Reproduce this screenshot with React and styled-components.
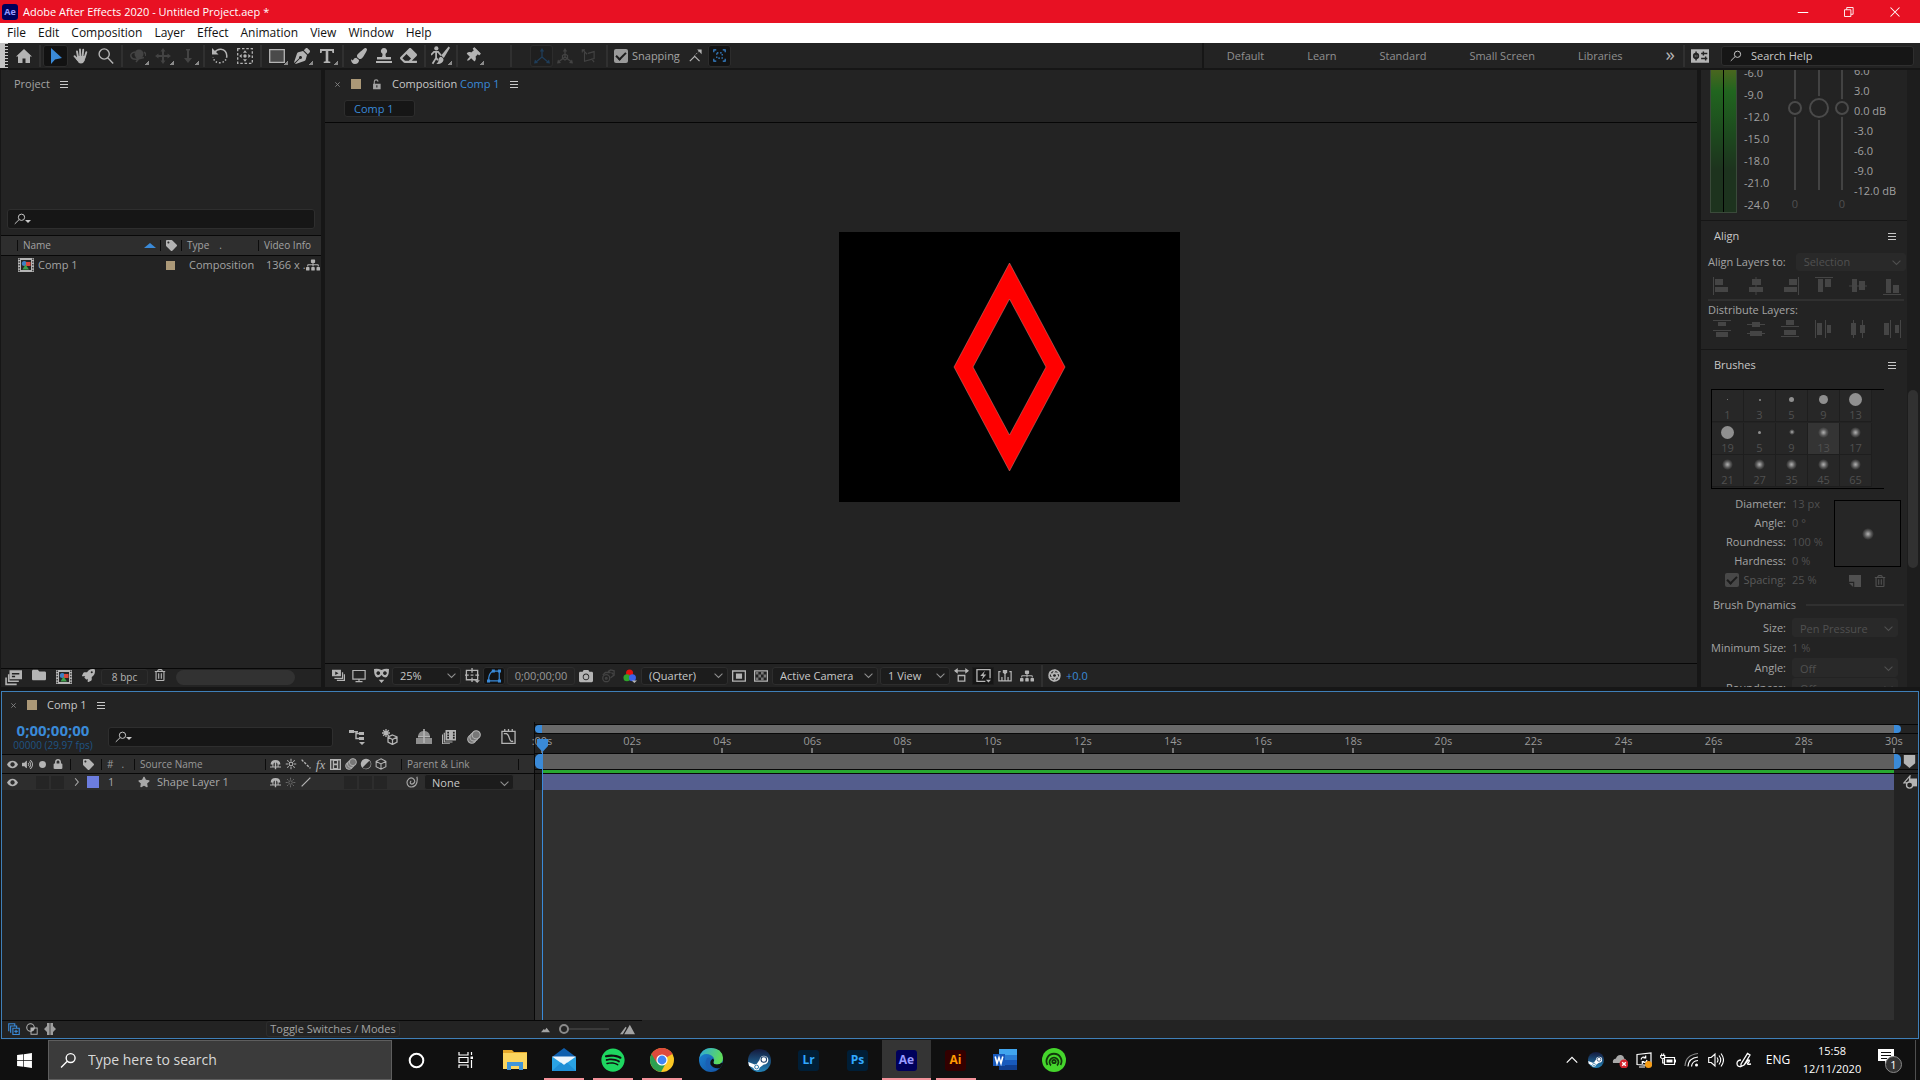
import { useState } from 'react'
import styled, { createGlobalStyle, css } from 'styled-components'
import {
  FaPaintBrush, FaEraser, FaThumbtack, FaPenNib, FaSitemap, FaTag, FaVolumeUp, FaLock,
  FaRegTrashAlt, FaFolder, FaRocket, FaCamera, FaStar, FaSpotify, FaWindows,
} from 'react-icons/fa'
import { Aperture } from 'lucide-react'

const c = {
  panel: '#232323',
  gap: '#161616',
  field: '#161616',
  line: '#303030',
  text: '#a3a3a3',
  bright: '#c8c8c8',
  dim: '#505050',
  blue: '#3a8ad8',
  tan: '#ab9877',
}

const GlobalStyle = createGlobalStyle`
  * { box-sizing: border-box; }
  body {
    margin: 0;
    background: ${c.gap};
    color: ${c.text};
    font-family: 'Open Sans', 'Noto Sans', sans-serif;
    font-size: 11px;
    line-height: 16px;
  }
  button, input, select { font: inherit; color: inherit; }
  button { background: none; border: 0; padding: 0; }
`

/* ---------- icons ---------- */

const glyphs = {
  home: <path d="M8 1 0 8.500h2V15h4.500v-4.500h3V15H14V8.500h2z" />,
  select: <path d="M3 0v16l4-4.500L14 10z" />,
  hand: <path fill="none" stroke="currentColor" strokeWidth="1.900" strokeLinecap="round" d="M5.200 10 4 3.500M7.300 9 7 1.500M9.500 9l.7-7.200M11.500 10l1.800-5.800M5 12 1.500 8.200" />,
  palm: <path d="M4.200 8h8.200l-.6 4.500Q10.500 15.500 8 15.500T4.500 13L3 11z" />,
  zoom: <path fill="none" stroke="currentColor" strokeWidth="1.400" d="M6.200.9a5 5 0 1 1 0 10.200 5 5 0 0 1 0-10.200M10 10l5.200 5.400" />,
  search: <path fill="none" stroke="currentColor" strokeWidth="1.300" d="M10 1.500a4.200 4.200 0 1 1 0 8.400 4.200 4.200 0 0 1 0-8.400M6.800 8.800 1 14.500" />,
  orbit: <g><circle cx="9" cy="6" r="4.500" /><path fill="none" stroke="currentColor" strokeWidth="1.500" d="M5 4Q0 5 1 8.500T8 11l6-1.500M14 4q2.500 2 1.500 4M6 9l2.500 2L6 14" /></g>,
  move: <path d="M8 0l2.500 3.500H9V7h3.500V5.500L16 8l-3.500 2.500V9H9v3.500h1.500L8 16l-2.500-3.500H7V9H3.500v1.500L0 8l3.500-2.500V7H7V3.500H5.500z" />,
  dolly: <path d="M6 1h4v1.500H9V10h3l-4 5-4-5h3V2.500H6z" />,
  rotate: <g fill="none" stroke="currentColor" strokeWidth="1.500"><path d="M2.500 4.500Q5 1 9 1.300 14.500 2 14.800 8" /><path strokeDasharray="1.500 1.800" d="M14.800 8q-.5 6.500-7 6.700Q2 14.500 1.200 9" /><path fill="currentColor" stroke="none" d="M0 0v6.500h6.500z" /></g>,
  pan: <g><path fill="none" stroke="currentColor" strokeWidth="1.300" strokeDasharray="2.500 1.800" d="M.7.700h14.600v14.600H.7z" /><circle cx="8" cy="8" r="1.700" /><path d="M8 2.200l2 2.500H6zM8 13.800l2-2.500H6zM2.200 8l2.500-2v4zM13.800 8l-2.500-2v4z" /></g>,
  rect: <path fill="#4a4a4a" stroke="currentColor" strokeWidth="1.300" d="M.7 1.700h14.600v12.600H.7z" />,
  type: <path d="M1 1h14v4h-1.500L13 3H9.300v10.300l2 .5V15H4.700v-1.200l2-.5V3H3l-.5 2H1z" />,
  stamp: <path d="M8 0a3 3 0 0 1 2 5.300q-1 1 0 3.700h5v2.500H1V9h5q1-2.700 0-3.700A3 3 0 0 1 8 0M0 13h16v2H0z" />,
  roto: <g><circle cx="4.500" cy="2" r="1.800" /><path fill="none" stroke="currentColor" strokeWidth="1.500" d="M0 7.500 2.500 5h3.500l2.500 3M4.300 5v5l-3 5M4.300 10l1.500 2" /><path d="M16 1.500 14.800.500 8.500 8l2.300 2zM8 9q2.800.5 2.500 3-1.500 3.800-6 3 2-.8 1.800-3T8 9" /></g>,
  axis: <g><path fill="none" stroke="currentColor" strokeWidth="1.300" d="M8 2v7l-6 5M8 9l6 5" /><path d="M8 0l2.200 3.500H5.800zM0 15.500l1-4 3 3.500zM16 15.500l-1-4-3 3.500z" /></g>,
  axisBox: <g><path fill="none" stroke="currentColor" strokeWidth="1.300" d="M8 3v6l-6 4.500M8 9l6 4.500M5.500 7.500 8 6l2.500 1.500v3L8 12l-2.500-1.500z" /><path d="M8 0l2.200 3.500H5.800zM0 15.500l1-4 3 3.500zM16 15.500l-1-4-3 3.500z" /></g>,
  axisView: <path fill="none" stroke="currentColor" strokeWidth="1.300" d="M2 1l5 5M1.500 4V1h3M4 4v10l11-3V3L8 5M12 11l3 4" />,
  snapEdge: <g><path fill="none" stroke="currentColor" strokeWidth="1.500" d="M1 15l6-6 6 6" /><path fill="none" stroke="currentColor" strokeWidth="1.200" strokeDasharray="1.500 1.500" d="M7 8l5-5" /><path d="M15.500.500v6l-5.500-6z" /></g>,
  snapBox: <g fill="none" stroke="currentColor" strokeWidth="1.400"><path d="M1 4V1h3M12 1h3v3M15 12v3h-3M4 15H1v-3" /><path strokeDasharray="2 2" d="M4.700 4.700h6.600v6.600H4.700z" /></g>,
  gear: <g><path d="M0 2h16v12H0z" /><circle cx="4.500" cy="8" r="2" fill="none" stroke="#232323" strokeWidth="1.600" /><path fill="none" stroke="#232323" strokeWidth="1.300" d="M4.500 4v8M9 5.800h5.500M11 4v3.500M9 10.200h5.500M13 8.500V12" /></g>,
  lockOpen: <path fillRule="evenodd" d="M3 7h11v8H3zM7.700 9v3.500h1.600V9zM4 7V4q0-3.500 3.500-3.500T11 3.500L9.500 4Q9.300 2 7.500 2T5.500 4v3z" />,
  comp: <g><path fill="#b5b5b5" d="M0 1h16v14H0z" /><path fill="none" stroke="#232323" strokeWidth="1.200" strokeDasharray="1.500 1.300" d="M1.200 1.500v13M14.800 1.500v13" /><path fill="#262626" d="M3 3h10v10H3z" /><circle cx="6.300" cy="6.500" r="2.500" fill="#3f7fc4" /><path fill="#d8463c" d="M8 5h4.500v4H8z" /><path fill="#3fa04c" d="M7.500 7.500l3.500 5H4.500z" /></g>,
  interpret: <g fill="none" stroke="currentColor" strokeWidth="1.500"><path fill="currentColor" d="M5 2h10.300v7H5z" /><path d="M3.500 5v6.500H13M1 8v6.500h10" /><path stroke="#232323" d="M6.500 4.500h7M6.500 7h3" /></g>,
  copyPlay: <g><path fillRule="evenodd" d="M0 1h11v8H0zM4 3v4.500L8 5.200z" /><path fill="none" stroke="currentColor" strokeWidth="1.500" d="M13 4v7.500H3M15.300 6.500v7.500H6" /></g>,
  monitor: <path fill="none" stroke="currentColor" strokeWidth="1.400" d="M1 1.700h14v9.800H1zM8 11.500V14M4 14.500h8" />,
  mask: <path fillRule="evenodd" d="M0 1q4-1 8 1 4-2 8-1 0 9-4 9-2.500 0-4-2.500Q6.500 10 4 10 0 10 0 1m4.500 2.500a2 2 0 1 0 .1 0m7 0a2 2 0 1 0 .1 0M5 12.500h6l-3 3.500z" />,
  target: <g fill="none" stroke="currentColor" strokeWidth="1.400"><path d="M1.500 2.500h12v10h-12zM7.500 0v5M7.500 10v5M0 7.500h4M11 7.500h4M6 7.500h3" /><path fill="currentColor" stroke="none" d="M10 13h6l-3 3z" /></g>,
  maskPath: <g><path fill="none" stroke="currentColor" strokeWidth="1.400" d="M2 13.500V10Q3 4 7 2.500l7 0v11z" /><path d="M0 12h3.500v3.500H0zM12.500 12H16v3.500h-3.500zM12.500.500H16V4h-3.500zM5.500.500H9V4H5.500z" /></g>,
  showSnap: <g fill="none" stroke="currentColor" strokeWidth="1.500"><circle cx="6" cy="10.500" r="4" /><circle cx="6" cy="10.500" r="1" /><path d="M2 7 5 4l6 0M8 3l3-2 4 1v5l-4 3M12 4l2 2" /></g>,
  rgb: <g><circle cx="7.500" cy="4.500" r="4" fill="#e2120e" /><circle cx="4.500" cy="10" r="4" fill="#2fa32c" /><circle cx="10.800" cy="10" r="4" fill="#3c62e8" /><path d="M10 13h6l-3 3z" /></g>,
  roi: <path fillRule="evenodd" d="M0 1.500h16v13H0zM1.500 3v10h13V3zM4.500 5h7v6h-7z" />,
  checker: <g><path fill="none" stroke="currentColor" strokeWidth="1.400" d="M.7 2.200h14.600v11.600H.7z" /><path fill="#777" d="M2 3h3v3.300H2zM8 3h3v3.300H8zM5 6.300h3v3.300H5zM11 6.300h3v3.300h-3zM2 9.600h3V13H2zM8 9.600h3V13H8z" /></g>,
  pixelAspect: <g><path fill="none" stroke="currentColor" strokeWidth="1.400" d="M1 3h14M4.500 8h7v6h-7z" /><path d="M0 3 4 0v6zM16 3l-4-3v6z" /></g>,
  fast: <g><path fill="none" stroke="currentColor" strokeWidth="1.400" d="M10 14.300H1V1.700h14V11" /><path d="M9.500 3 4.500 8.500h3L6 12.500l5-5.500H8zM10.500 12.500H16l-2.700 3z" /></g>,
  tlOpen: <g><path fill="none" stroke="currentColor" strokeWidth="1.400" d="M3 3H1v10.500h14V3h-2M4.500 13V9M8 13V6M11.500 13V9" /><path d="M5.500 1h5v3L8 6.500 5.500 4z" /></g>,
  eye: <path fillRule="evenodd" d="M8 2.500Q13 2.500 16 8q-3 5.500-8 5.500T0 8q3-5.500 8-5.500M8 4.800a3.200 3.200 0 1 0 .1 0" />,
  dot: <circle cx="8" cy="8" r="5" />,
  flow: <g><path d="M0 1h5v3H0zM10 3h5v3h-5zM10 8h5v3h-5zM10 13h6l-3 3z" /><path fill="none" stroke="currentColor" strokeWidth="1.400" d="M4 2.700h5M7 2.500v7h4M7 4.500h4" /></g>,
  draft3d: <g fill="none" stroke="currentColor" strokeWidth="1.300"><path d="M10.500 6 15 8v5l-4.500 2.500L6 13V8zM6 8l4.500 2.500L15 8M10.500 10.500v5M4 0v8M0 4h8M1.200 1.200l5.600 5.600M6.800 1.200 1.200 6.800" /></g>,
  shy: <g><path d="M2 7q1-5 6-5t6 5zM0 9h16v6H0z" opacity=".75" /><path d="M7.200 0h1.600v14H7.200zM2 7h12v1.500H2z" /></g>,
  shySwitch: <path fillRule="evenodd" d="M1 8q0-6.500 7-6.500T15 8h-2.500v3H16v1.500H9V15H7v-2.500H0V11h3.500V8zm4 0v3h2V5Q5 5.500 5 8m4-3v6h2V8q0-2.500-2-3" />,
  blend: <path fillRule="evenodd" d="M4 0h12v12H4zM6 2v2h2V2zM6 5v2h2V5zM6 8v2h2V8zM12.500 2v2h2V2zM12.500 5v2h2V5zM12.500 8v2h2V8zM2 3h1.300v10H12v1.300H2zM0 5h1.200v10H9v1H0z" />,
  motion: <g fill="#777" stroke="currentColor" strokeWidth="1.200"><circle cx="5.500" cy="10.500" r="4.700" /><circle cx="8" cy="8" r="4.700" /><circle cx="10.500" cy="5.500" r="4.700" /></g>,
  graph: <path fill="none" stroke="currentColor" strokeWidth="1.400" d="M1 2.500h14v12.800H1zM4 0v2.500M8 0v2.500M12 0v2.500M3 5h3q2 1 3 5t4 3" />,
  sun: <g fill="none" stroke="currentColor" strokeWidth="1.400"><circle cx="8" cy="8" r="2.500" /><path d="M8 1v3M8 12v3M1 8h3M12 8h3M3 3l2 2M11 11l2 2M13 3l-2 2M5 11l-2 2" /></g>,
  quality: <path fill="none" stroke="currentColor" strokeWidth="2.200" strokeDasharray="4 2" d="M1 1l14 14" />,
  slash: <path fill="none" stroke="currentColor" strokeWidth="2" d="M15 1 1 15" />,
  frame: <path fillRule="evenodd" d="M0 0h16v16H0zM2 2v12h2V2zM12 2v12h2V2zM6 3v3.500h4V3zM6 9v4h4V9z" />,
  adjust: <path fillRule="evenodd" d="M8 1a7 7 0 1 0 .1 0M12.500 3.500a6.200 6.200 0 0 1-9 9z" />,
  cube: <path fill="none" stroke="currentColor" strokeWidth="1.400" d="M8 1l6.500 3.500v7L8 15l-6.500-3.500v-7zM1.500 4.500 8 8l6.500-3.500M8 8v7" />,
  spiral: <path fill="none" stroke="currentColor" strokeWidth="1.500" d="M14.500 1Q16 7 13 12q-4 4-9 2-4-3-2-8 3-5 7-3 4 3 2 6-3 3-5 1-1-2 1-3.500" />,
  chevron: <path fill="none" stroke="currentColor" strokeWidth="1.800" d="M1 4.500 8 11.500l7-7" />,
  chevronUp: <path fill="none" stroke="currentColor" strokeWidth="1.600" d="M1 11.500l7-7 7 7" />,
  arrowRight: <path fill="none" stroke="currentColor" strokeWidth="1.800" d="M5 2l5 6-5 6" />,
  newBrush: <path d="M0 0h16v16H7V9H0zM0 10.500h5.500V16z" />,
  layers: <g fill="none" stroke="#3a8ad8" strokeWidth="1.500"><path d="M1 11V1h8v3M3.500 13V4h8v2.500" /><path d="M6.500 7h8.500v8.500H6.500zM10.700 9v4.500M8.500 11.200H13" /></g>,
  modes: <g><circle cx="6" cy="6" r="5" fill="none" stroke="currentColor" strokeWidth="1.400" /><path fillRule="evenodd" d="M6 6h9.500v9.500H6zM7.300 11v3.200h7v-7h-3Q11 10.500 7.300 11" /></g>,
  inOut: <path d="M4 0h3.500v16H4v-4L0 8l4-4zM8.500 0H12v4l4 4-4 4v4H8.500z" opacity=".85" />,
  marker: <path d="M1 0h14v10l-7 6-7-6z" />,
  compBtn: <g><path d="M8 4h8v9H8z" /><path fill="#232323" stroke="currentColor" strokeWidth="1.400" d="M8 1 1 9h6z" /><circle cx="7.500" cy="11.500" r="3.500" fill="#232323" stroke="currentColor" strokeWidth="1.500" /></g>,
  mountain: <path d="M0 13l5-6 2 2 3-4 6 8z" />,
  mountains: <path d="M4.500 13 10.500 3 16 13zM0 13 6 5l1 1-4 7z" />,
  minimize: <path d="M1 8h14v1.300H1z" />,
  restore: <path fill="none" stroke="currentColor" strokeWidth="1.200" d="M2 5h8.500v9H2zM5 5V2h8.500v9h-3" />,
  close: <path fill="none" stroke="currentColor" strokeWidth="1.400" d="M2 2l12 12M14 2 2 14" />,
  closeTab: <path fill="none" stroke="currentColor" strokeWidth="2.700" d="M1 1l14 14M15 1 1 15" />,
  taskView: <g fill="none" stroke="currentColor" strokeWidth="1.200"><path d="M1 0v3h9V0M1 16v-3h9v3M1 5.500h9v5H1zM13.500 0v3M13.500 8v8" /><path fill="currentColor" stroke="none" d="M12.500 4.500h2.500V7h-2.500z" /></g>,
}

const GlyphSvg = styled.svg`
  display: block;
  flex: none;
  fill: currentColor;
`

function Glyph({ name, size = 16 }) {
  return (
    <GlyphSvg width={size} height={size} viewBox="0 0 16 16" aria-hidden="true">
      {glyphs[name]}
      {name === 'hand' && glyphs.palm}
    </GlyphSvg>
  )
}

/* ---------- shared parts ---------- */

const Page = styled.div`
  display: flex;
  flex-direction: column;
  height: 100vh;
  overflow: hidden;
  white-space: nowrap;
`

const Burger = styled.button`
  width: 8px;
  height: 7px;
  border-top: 1px solid ${c.bright};
  border-bottom: 1px solid ${c.bright};
  background: linear-gradient(transparent 2px, ${c.bright} 2px, ${c.bright} 3px, transparent 3px);
`

const Swatch = styled.span`
  flex: none;
  width: ${p => p.$size || 10}px;
  height: ${p => p.$size || 10}px;
  background: ${p => p.$color || c.tan};
`

const CloseX = styled.button`
  width: 6px;
  height: 16px;
  display: flex;
  align-items: center;
  color: #8a8a8a;
`

const Tick = styled.input`
  appearance: none;
  flex: none;
  width: 14px;
  height: 14px;
  margin: 0;
  border-radius: 2px;
  background: ${p => (p.disabled ? '#484848' : '#9a9a9a')};
  display: grid;
  place-items: center;
  &:checked::after {
    content: '';
    width: 8px;
    height: 4px;
    border-left: 2px solid #1c1c1c;
    border-bottom: 2px solid #1c1c1c;
    transform: translateY(-1px) rotate(-45deg);
  }
`

const SelectBox = styled.span`
  display: inline-grid;
  align-items: center;
  flex: none;
  width: ${p => p.$w}px;
  height: ${p => p.$h || 18}px;
  color: ${p => (p.$dim ? c.dim : c.bright)};
  background: ${p => (p.$dim ? '#292929' : '#1c1c1c')};
  border: 1px solid ${p => (p.$dim ? '#292929' : '#2d2d2d')};
  border-radius: 3px;
  select, svg { grid-area: 1 / 1; }
  select {
    appearance: none;
    width: 100%;
    border: 0;
    padding: 0 20px 0 7px;
    background: none;
    opacity: 1;
  }
  svg { justify-self: end; margin-right: 4px; pointer-events: none; color: ${p => (p.$dim ? c.dim : '#8f8f8f')}; }
`

function Select({ label, w, h, dim, value }) {
  return (
    <SelectBox $w={w} $h={h} $dim={dim}>
      <select aria-label={label} disabled={dim} defaultValue={value}>
        <option>{value}</option>
      </select>
      <Glyph name="chevron" size={9} />
    </SelectBox>
  )
}

const SearchBox = styled.label`
  display: flex;
  align-items: center;
  flex: none;
  gap: ${p => p.$gap || 4}px;
  width: ${p => (p.$w ? p.$w + 'px' : 'auto')};
  height: 20px;
  padding: 0 ${p => (p.$gap ? 8 : 6)}px;
  background: ${c.field};
  border: 1px solid #2e2e2e;
  border-radius: 3px;
  color: ${c.bright};
  input {
    flex: 1;
    min-width: 0;
    border: 0;
    padding: 0;
    background: none;
    outline: 0;
  }
  input::placeholder { color: ${c.bright}; opacity: 1; }
`

const DownTri = styled.i`
  border: 3px solid transparent;
  border-top-color: ${c.bright};
  border-bottom: 0;
  margin: 4px 0 0 -5px;
`

/* ---------- title and menu ---------- */

const TitleBar = styled.header`
  display: flex;
  align-items: center;
  height: 23px;
  flex: none;
  padding: 0 2px;
  gap: 5px;
  background: #e81123;
  color: #fff;
`

const AppBadge = styled.span`
  display: grid;
  place-items: center;
  width: ${p => p.$size}px;
  height: ${p => p.$size}px;
  border-radius: 3px;
  background: ${p => p.$bg};
  color: ${p => p.$fg};
  font-weight: 700;
  font-size: ${p => (p.$size > 18 ? 12 : 9)}px;
  line-height: 1;
`

const WindowButtons = styled.div`
  display: flex;
  margin-left: auto;
  button {
    display: grid;
    place-items: center;
    width: 46px;
    height: 20px;
  }
`

const MenuBar = styled.nav`
  display: flex;
  align-items: center;
  height: 20px;
  flex: none;
  padding-left: 7px;
  gap: 12px;
  background: #fff;
  color: #111;
  font-size: 12px;
`

const menus = ['File', 'Edit', 'Composition', 'Layer', 'Effect', 'Animation', 'View', 'Window', 'Help']

/* ---------- toolbar ---------- */

const ToolBar = styled.div`
  display: flex;
  align-items: center;
  height: 27px;
  flex: none;
  background: ${c.panel};
  border-bottom: 2px solid ${c.gap};
`

const Gripper = styled.div`
  width: 8px;
  height: 25px;
  margin-right: 3px;
  border-left: 5px solid #c4c4c4;
  background: repeating-linear-gradient(#c4c4c4 0 1px, ${c.panel} 1px 3px);
`

const Tool = styled.button`
  display: flex;
  align-items: center;
  justify-content: center;
  flex: none;
  width: ${p => p.$w || 25}px;
  height: 22px;
  color: ${p => (p.$off ? '#434343' : '#b4b4b4')};
  ${p => p.$sub && css`
    background: linear-gradient(135deg, transparent 50%, #8a8a8a 50%) right 1px bottom 2px / 4px 4px no-repeat;
  `}
  ${p => p.$on && css`
    background: ${p.$off ? '#1f1f1f' : '#121212'};
    box-shadow: inset 0 0 0 1px #2c2c2c;
    border-radius: 3px;
    color: ${p.$off ? '#1f3d59' : c.blue};
  `}
  ${p => p.$pressed && css`
    background: #151515;
    box-shadow: inset 0 0 0 1px #1c1c1c;
  `}
`

const Sep = styled.span`
  flex: none;
  width: 7px;
  height: 22px;
  background: linear-gradient(#303030, #303030) center / 2px 100% no-repeat;
`

const Space = styled.span`
  flex: none;
  width: ${p => p.$w}px;
`

const SnapLabel = styled.label`
  display: flex;
  align-items: center;
  gap: 4px;
`

const Workspaces = styled.div`
  display: flex;
  align-items: center;
  gap: 43px;
  margin-left: auto;
  padding: 0 8px 0 23px;
  border-left: 2px solid ${c.gap};
  height: 25px;
  color: #909090;
`

const HelpArea = styled.div`
  display: flex;
  align-items: center;
  gap: 12px;
  height: 22px;
  padding: 0 6px 0 5px;
  border-left: 2px solid #303030;
`

const More = styled.button`
  font-size: 19px;
  padding-bottom: 4px;
  line-height: 16px;
  color: #b4b4b4;
`

const toolGroups = [
  [{ n: 'home' }],
  [{ n: 'select', on: true }, { n: 'hand' }, { n: 'zoom' }],
  [{ n: 'orbit', off: true, sub: true }, { n: 'move', off: true, sub: true }, { n: 'dolly', off: true, sub: true }],
  [{ n: 'rotate' }, { n: 'pan' }],
  [{ n: 'rect', sub: true }, { n: 'pen', icon: <FaPenNib size={16} />, sub: true }, { n: 'type', sub: true }],
  [{ n: 'brush', icon: <FaPaintBrush size={16} /> }, { n: 'stamp' }, { n: 'eraser', icon: <FaEraser size={17} /> }],
  [{ n: 'roto', sub: true, size: 19 }],
  [{ n: 'pin', icon: <FaThumbtack size={15} style={{ rotate: '45deg' }} />, sub: true }],
]

function TopTools() {
  const [snap, setSnap] = useState(true)
  return (
    <ToolBar>
      <Gripper />
      {toolGroups.map((group, i) => [
        i > 0 && <Sep key={'sep' + i} />,
        ...group.map(t => (
          <Tool key={t.n} aria-label={t.n} $on={t.on} $off={t.off} $sub={t.sub}>
            {t.icon || <Glyph name={t.n} size={t.size} />}
          </Tool>
        )),
      ])}
      <Space $w={22} />
      <Sep />
      <Space $w={16} />
      <Tool aria-label="local axis" $w={23} $on $off><Glyph name="axis" /></Tool>
      <Tool aria-label="world axis" $w={23} $off><Glyph name="axisBox" /></Tool>
      <Tool aria-label="view axis" $w={23} $off><Glyph name="axisView" size={14} /></Tool>
      <Space $w={4} />
      <Sep />
      <Space $w={4} />
      <SnapLabel>
        <Tick type="checkbox" checked={snap} onChange={() => setSnap(!snap)} />
        Snapping
      </SnapLabel>
      <Space $w={3} />
      <Tool aria-label="snap edges"><Glyph name="snapEdge" size={13} /></Tool>
      <Tool aria-label="snap features" $w={23} $on><Glyph name="snapBox" size={13} /></Tool>
      <Workspaces>
        {['Default', 'Learn', 'Standard', 'Small Screen', 'Libraries'].map(w => <button key={w}>{w}</button>)}
        <More aria-label="more workspaces">»</More>
      </Workspaces>
      <HelpArea>
        <Tool aria-label="workspace settings" $w={19}><Glyph name="gear" size={18} /></Tool>
        <SearchBox $w={193} $gap={9}>
          <Glyph name="search" size={12} />
          <input placeholder="Search Help" aria-label="Search Help" />
        </SearchBox>
      </HelpArea>
    </ToolBar>
  )
}

/* ---------- main row ---------- */

const Main = styled.main`
  display: grid;
  grid-template-columns: 320px 1fr 206px 9px;
  column-gap: 4px;
  flex: 1;
  min-height: 0;
  padding: 0 0 4px 1px;
`

const Panel = styled.section`
  display: flex;
  flex-direction: column;
  min-width: 0;
  min-height: 0;
  overflow: hidden;
  background: ${c.panel};
`

const PanelHead = styled.div`
  display: flex;
  align-items: center;
  flex: none;
  height: 28px;
  gap: 10px;
  padding-left: ${p => p.$pad || 13}px;
  color: ${c.text};
`

const PreviewArea = styled.div`
  height: 111px;
  flex: none;
`

const ProjectSearch = styled.div`
  display: flex;
  flex-direction: column;
  padding: 0 6px 6px;
`

const ProjectTable = styled.table`
  table-layout: fixed;
  width: 100%;
  border-collapse: collapse;
  color: ${c.text};
  th {
    height: 20px;
    padding: 0;
    border-top: 1px solid #080808;
    border-bottom: 1px solid #080808;
    background: #2e2e2e;
    font-weight: 400;
    font-size: 10px;
    text-align: left;
  }
  td { height: 19px; padding: 0; }
`

const HeadCell = styled.span`
  display: flex;
  align-items: center;
  height: 11px;
  line-height: 11px;
  gap: ${p => p.$gap || 0}px;
  padding: 0 4px 0 5px;
  border-left: 1px solid #0c0c0c;
`

const CellRow = styled.span`
  display: flex;
  align-items: center;
  gap: ${p => (p.$gap === undefined ? 4 : p.$gap)}px;
  padding-left: ${p => p.$pad || 0}px;
`

const SortTri = styled.i`
  margin-left: auto;
  border: 6px solid transparent;
  border-bottom: 5px solid ${c.blue};
  border-top: 0;
`

const PanelFoot = styled.div`
  display: flex;
  align-items: center;
  flex: none;
  margin-top: auto;
  color: #b4b4b4;
  border-top: 1px solid #080808;
  ${p => p.$comp
    ? css`height: 24px; padding-left: 3px;`
    : css`height: 19px; padding: 0 0 2px 4px; gap: 10px;`}
`

const BpcButton = styled.button`
  width: 47px;
  height: 16px;
  margin: 0 -4px;
  border: 1px solid #2d2d2d;
  border-radius: 3px;
  font-size: 10px;
  line-height: 14px;
`

const ScrollPill = styled.div`
  width: 119px;
  height: 15px;
  border-radius: 8px;
  background: #323232;
`

function ProjectPanel() {
  return (
    <Panel>
      <PanelHead>Project <Burger aria-label="panel menu" /></PanelHead>
      <PreviewArea />
      <ProjectSearch>
        <SearchBox>
          <Glyph name="search" size={12} />
          <DownTri />
          <input aria-label="Search project" />
        </SearchBox>
      </ProjectSearch>
      <ProjectTable>
        <colgroup>
          <col width="16" /><col width="143" /><col width="21" /><col width="77" /><col />
        </colgroup>
        <thead>
          <tr>
            <th />
            <th><HeadCell>Name<SortTri /></HeadCell></th>
            <th><HeadCell><FaTag size={11} color="#b4b4b4" /></HeadCell></th>
            <th><HeadCell $gap={10}>Type <span>.</span></HeadCell></th>
            <th><HeadCell>Video Info</HeadCell></th>
          </tr>
        </thead>
        <tbody>
          <tr>
            <td />
            <td><CellRow $pad={1}><Glyph name="comp" />Comp 1</CellRow></td>
            <td><CellRow $pad={6}><Swatch $size={9} /></CellRow></td>
            <td><CellRow $pad={8}>Composition</CellRow></td>
            <td><CellRow $pad={8} $gap={0}>1366 x .<FaSitemap size={14} color="#b4b4b4" /></CellRow></td>
          </tr>
        </tbody>
      </ProjectTable>
      <PanelFoot>
        <button aria-label="interpret footage"><Glyph name="interpret" size={17} /></button>
        <button aria-label="new folder"><FaFolder size={14} /></button>
        <button aria-label="new composition"><Glyph name="comp" size={16} /></button>
        <button aria-label="project settings"><FaRocket size={13} /></button>
        <BpcButton>8 bpc</BpcButton>
        <button aria-label="delete"><FaRegTrashAlt size={12} /></button>
        <ScrollPill />
      </PanelFoot>
    </Panel>
  )
}

const CompTitle = styled.span`
  color: ${c.bright};
  b { font-weight: 400; color: ${c.blue}; }
`

const CompTabs = styled.div`
  display: flex;
  flex: none;
  height: 25px;
  padding: 2px 19px;
  border-bottom: 1px solid #060606;
`

const CompTab = styled.button`
  width: 71px;
  height: 17px;
  padding-left: 9px;
  border: 1px solid #2d2d2d;
  border-radius: 3px;
  background: ${c.field};
  color: ${c.blue};
  line-height: 15px;
  text-align: left;
`

const Viewport = styled.div`
  flex: 1;
  display: flex;
  justify-content: center;
  align-items: flex-start;
  padding: 109px 3px 0 0;
`

const Artboard = styled.svg`
  display: block;
  width: 341px;
  height: 270px;
  background: #000;
`

const FootItem = styled(Tool)`
  width: ${p => p.$w || 22}px;
  height: 18px;
`

const TimeBox = styled.button`
  width: 68px;
  height: 18px;
  border: 1px solid #2d2d2d;
  border-radius: 3px;
  color: #999;
`

const Exposure = styled.span`
  padding-left: 3px;
  color: ${c.blue};
`

function CompositionPanel() {
  return (
    <Panel>
      <PanelHead $pad={10}>
        <CloseX aria-label="close"><Glyph name="closeTab" size={5} /></CloseX>
        <Swatch />
        <Glyph name="lockOpen" size={11} />
        <CompTitle>Composition <b>Comp 1</b></CompTitle>
        <Burger aria-label="panel menu" />
      </PanelHead>
      <CompTabs><CompTab>Comp 1</CompTab></CompTabs>
      <Viewport>
        <Artboard viewBox="0 0 341 270">
          <path
            fill="#f00" stroke="#c98a80" strokeWidth="0.5" fillRule="evenodd"
            d="M170.500 31 226 135 170.500 239 115 135zM170.500 67 134 135 170.500 203 207 135z"
          />
        </Artboard>
      </Viewport>
      <PanelFoot $comp>
        <FootItem aria-label="always preview" $w={20}><Glyph name="copyPlay" size={13} /></FootItem>
        <FootItem aria-label="primary viewer"><Glyph name="monitor" size={14} /></FootItem>
        <FootItem aria-label="vr"><Glyph name="mask" size={15} /></FootItem>
        <Select label="Magnification" w={69} value="25%" />
        <FootItem aria-label="grid options"><Glyph name="target" size={15} /></FootItem>
        <FootItem aria-label="mask visibility" $on><Glyph name="maskPath" size={14} /></FootItem>
        <Space $w={2} />
        <TimeBox>0;00;00;00</TimeBox>
        <FootItem aria-label="snapshot"><FaCamera size={14} /></FootItem>
        <FootItem aria-label="show snapshot" $off><Glyph name="showSnap" size={14} /></FootItem>
        <FootItem aria-label="channels"><Glyph name="rgb" size={14} /></FootItem>
        <Select label="Resolution" w={87} value="(Quarter)" />
        <FootItem aria-label="region of interest"><Glyph name="roi" size={14} /></FootItem>
        <FootItem aria-label="transparency grid"><Glyph name="checker" size={14} /></FootItem>
        <Select label="3D view" w={106} value="Active Camera" />
        <Space $w={2} />
        <Select label="View layout" w={70} value="1 View" />
        <FootItem aria-label="pixel aspect"><Glyph name="pixelAspect" size={15} /></FootItem>
        <FootItem aria-label="fast previews" $pressed><Glyph name="fast" size={15} /></FootItem>
        <FootItem aria-label="timeline"><Glyph name="tlOpen" size={14} /></FootItem>
        <FootItem aria-label="flowchart"><FaSitemap size={14} /></FootItem>
        <Sep />
        <FootItem aria-label="reset exposure" $w={18}><Aperture size={13} strokeWidth={3} /></FootItem>
        <Exposure>+0.0</Exposure>
      </PanelFoot>
    </Panel>
  )
}

/* ---------- right column ---------- */

const Audio = styled.div`
  display: flex;
  align-items: flex-end;
  flex: none;
  height: 150px;
  overflow: hidden;
  padding-left: 9px;
  color: #a0a0a0;
`

const Meter = styled.div`
  width: 27px;
  height: 143px;
  margin-bottom: 7px;
  border: 1px solid #3a4a3a;
  border-top: 0;
  background:
    linear-gradient(#000, #000) center / 1px 100% no-repeat,
    linear-gradient(#4a661f, #21651f 15%, #1d4a1e 45%, #1d331e 70%);
`

const Scale = styled.div`
  display: flex;
  flex-direction: column;
  flex: none;
  width: ${p => p.$w}px;
  padding-left: ${p => p.$pad || 0}px;
  margin-bottom: ${p => p.$bottom}px;
  line-height: ${p => p.$line}px;
`

const Faders = styled.div`
  display: flex;
  align-items: flex-end;
  flex: none;
  margin-left: 10px;
`

const Channel = styled.label`
  display: flex;
  flex-direction: column;
  align-items: center;
  width: ${p => (p.$wide ? 23 : 24)}px;
  color: ${c.dim};
  span { height: 30px; padding-top: 6px; }
  input {
    appearance: none;
    writing-mode: vertical-lr;
    width: 22px;
    height: 164px;
    margin: 0;
    background: linear-gradient(#434343, #434343) center / 2px 100% no-repeat;
  }
  input::-webkit-slider-thumb {
    appearance: none;
    width: ${p => (p.$wide ? 20 : 14)}px;
    height: ${p => (p.$wide ? 20 : 14)}px;
    border: 2px solid #4a4a4a;
    border-radius: 50%;
    background: ${c.panel};
    box-shadow: 0 0 0 2px ${c.panel};
  }
`

const SideHead = styled.div`
  display: flex;
  align-items: center;
  justify-content: space-between;
  flex: none;
  height: 31px;
  padding: 0 11px 0 13px;
  border-top: 1px solid ${c.gap};
  color: ${c.bright};
`

const AlignBody = styled.div`
  height: 98px;
  flex: none;
  padding: 2px 3px 0 7px;
`

const Row = styled.div`
  display: flex;
  align-items: center;
  gap: 10px;
`

const DynamicsHead = styled(Row)`
  padding: 8px 0 5px 2px;
`

const AlignIcons = styled.div`
  display: flex;
  gap: 16px;
  padding: ${p => (p.$last ? '2px 0 0 5px' : '6px 0 4px 5px')};
  color: #454545;
`

const Rule = styled.hr`
  flex: 1;
  height: 2px;
  margin: 0;
  border: 0;
  background: ${c.line};
`

const DistributeLabel = styled.div`
  padding-top: 1px;
`

const alignIcons = [
  'M0 0h1v18H0zM2 2h8v6H2zM2 10h13v5H2z',
  'M8.500 0h1v18h-1zM5 2h9v6H5zM2 10h14v5H2z',
  'M17 0h1v18h-1zM8 2h8v6H8zM3 10h13v5H3z',
  'M0 0h18v1H0zM3 2h5v13H3zM10 2h6v8h-6z',
  'M0 8.500h18v1H0zM3 2h5v13H3zM10 4h6v9h-6z',
  'M0 17h18v1H0zM3 2h5v14H3zM10 8h6v8h-6z',
]

const distributeIcons = [
  'M0 0h18v1H0zM5 2h8v4H5zM0 10h18v1H0zM3 12h12v5H3z',
  'M0 4h18v1H0zM5 2h8v5H5zM0 13h18v1H0zM3 11h12v5H3z',
  'M0 6h18v1H0zM5 0h8v5H5zM0 16h18v1H0zM3 10h12v5H3z',
  'M0 0h1v18H0zM2 3h5v12H2zM10 0h1v18h-1zM12 5h4v8h-4z',
  'M4 0h1v18H4zM2 3h5v12H2zM13 0h1v18h-1zM11 5h5v8h-5z',
  'M7 0h1v18H7zM1 3h5v12H1zM17 0h1v18h-1zM12 5h4v8h-4z',
]

const BrushBody = styled.div`
  padding: 9px 3px 0 10px;
`

const BrushGrid = styled.div`
  display: grid;
  grid-template-columns: repeat(5, 32px);
  width: 173px;
  height: 100px;
  border: 1px solid #000;
  border-right: 0;
`

const BrushCell = styled.button`
  display: grid;
  grid-template-rows: 19px 12px;
  place-items: center;
  height: 32px;
  padding-bottom: 2px;
  line-height: 10px;
  border: 1px solid #1e1e1e;
  border-width: 0 1px 1px 0;
  background: ${p => (p.$on ? '#343434' : '#272727')};
  color: ${c.dim};
`

const BrushDot = styled.i`
  width: ${p => p.$d}px;
  height: ${p => p.$d}px;
  border-radius: 50%;
  background: ${p => (p.$soft ? 'radial-gradient(#a8a8a8 5%, #5a5a5a 40%, transparent 70%)' : '#8f8f8f')};
`

const brushes = [
  [1, 1], [3, 2], [5, 5], [9, 9], [13, 13],
  [19, 13], [5, 3], [9, 6, 1], [13, 11, 1], [17, 11, 1],
  [21, 11, 1], [27, 11, 1], [35, 11, 1], [45, 11, 1], [65, 11, 1],
]

const BrushInfo = styled.div`
  display: flex;
  padding-top: 5px;
`

const Props = styled.dl`
  display: grid;
  grid-template-columns: 75px 42px;
  column-gap: 6px;
  margin: 0;
  grid-auto-rows: ${p => p.$row}px;
  align-items: center;
  line-height: ${p => p.$row}px;
  dt { text-align: right; }
  dd { margin: 0; color: ${c.dim}; }
`

const SpacingLabel = styled.label`
  display: flex;
  align-items: center;
  justify-content: flex-end;
  gap: 4px;
  color: #5a5a5a;
`

const BrushSide = styled.div`
  display: flex;
  flex-direction: column;
  align-items: center;
  gap: 8px;
  padding-top: 6px;
`

const BrushPreview = styled.div`
  display: grid;
  place-items: center;
  width: 67px;
  height: 67px;
  border: 1px solid #000;
  background: #262626;
`

const BrushActions = styled.div`
  display: flex;
  gap: 13px;
  color: ${c.dim};
`

const Gutter = styled.div`
  margin-left: -4px;
  padding: 320px 2px 0 1px;
  background: #1d1d1d;
`

const GutterThumb = styled.div`
  height: 178px;
  border-radius: 5px;
  background: #313131;
`

function SideColumn() {
  return (
    <Panel>
      <Audio>
        <Meter />
        <Scale $w={36} $pad={7} $bottom={4} $line={22}>
          {['-6.0', '-9.0', '-12.0', '-15.0', '-18.0', '-21.0', '-24.0'].map(v => <span key={v}>{v}</span>)}
        </Scale>
        <Faders>
          <Channel><input type="range" aria-label="Left level" defaultValue="50" /><span>0</span></Channel>
          <Channel $wide><input type="range" aria-label="Master level" defaultValue="50" /><span /></Channel>
          <Channel><input type="range" aria-label="Right level" defaultValue="50" /><span>0</span></Channel>
        </Faders>
        <Scale $w={52} $bottom={19} $line={20}>
          {['6.0', '3.0', '0.0 dB', '-3.0', '-6.0', '-9.0', '-12.0 dB'].map(v => <span key={v}>{v}</span>)}
        </Scale>
      </Audio>
      <SideHead>Align <Burger aria-label="panel menu" /></SideHead>
      <AlignBody>
        <Row>Align Layers to: <Select label="Align Layers to" w={110} dim value="Selection" /></Row>
        <AlignIcons>
          {alignIcons.map(d => <GlyphSvg key={d} width="18" height="18"><path d={d} /></GlyphSvg>)}
        </AlignIcons>
        <Rule />
        <DistributeLabel>Distribute Layers:</DistributeLabel>
        <AlignIcons $last>
          {distributeIcons.map(d => <GlyphSvg key={d} width="18" height="18"><path d={d} /></GlyphSvg>)}
        </AlignIcons>
      </AlignBody>
      <SideHead>Brushes <Burger aria-label="panel menu" /></SideHead>
      <BrushBody>
        <BrushGrid>
          {brushes.map(([n, d, soft], i) => (
            <BrushCell key={i} $on={i === 8}><BrushDot $d={d} $soft={soft} />{n}</BrushCell>
          ))}
        </BrushGrid>
        <BrushInfo>
          <Props $row={19}>
            <dt>Diameter:</dt><dd>13 px</dd>
            <dt>Angle:</dt><dd>0 °</dd>
            <dt>Roundness:</dt><dd>100 %</dd>
            <dt>Hardness:</dt><dd>0 %</dd>
            <dt><SpacingLabel><Tick type="checkbox" checked disabled readOnly />Spacing:</SpacingLabel></dt>
            <dd>25 %</dd>
          </Props>
          <BrushSide>
            <BrushPreview><BrushDot $d={12} $soft /></BrushPreview>
            <BrushActions>
              <Glyph name="newBrush" size={12} />
              <FaRegTrashAlt size={12} />
            </BrushActions>
          </BrushSide>
        </BrushInfo>
        <DynamicsHead>Brush Dynamics<Rule /></DynamicsHead>
        <Props $row={20}>
          <dt>Size:</dt><dd><Select label="Size" w={106} h={19} dim value="Pen Pressure" /></dd>
          <dt>Minimum Size:</dt><dd>1 %</dd>
          <dt>Angle:</dt><dd><Select label="Angle" w={106} h={19} dim value="Off" /></dd>
          <dt>Roundness:</dt><dd><Select label="Roundness" w={106} h={19} dim value="Off" /></dd>
        </Props>
      </BrushBody>
    </Panel>
  )
}

/* ---------- timeline ---------- */

const TimelinePanel = styled.section`
  display: flex;
  flex-direction: column;
  flex: none;
  height: 348px;
  margin: 0 1px 1px;
  border: 1px solid #3f7fb8;
  background: ${c.panel};
`

const TimelineTabs = styled(PanelHead)`
  height: 30px;
  padding: 0 0 4px 9px;
  color: ${c.bright};
`

const TimelineBody = styled.div`
  display: flex;
  flex: 1;
  min-height: 0;
`

const LayerPane = styled.div`
  width: 533px;
  flex: none;
  border-right: 1px solid #080808;
`

const TimeTools = styled.div`
  display: flex;
  align-items: center;
  height: 32px;
  padding: 0 10px 3px;
  color: #b4b4b4;
`

const Timecode = styled.div`
  display: flex;
  flex-direction: column;
  align-items: center;
  width: 82px;
  margin-right: 14px;
  color: #1f5484;
  font-size: 10px;
  line-height: 14px;
  strong { font-size: 15px; line-height: 16px; color: ${c.blue}; }
`

const LayerGrid = styled.div`
  display: grid;
  grid-template-columns: 68px 31px 33px 131px 136px 117px 1fr;
  align-items: center;
  height: ${p => (p.$head ? 20 : 16)}px;
  background: #2d2d2d;
  ${p => p.$head && css`
    font-size: 10px;
    border: 1px solid #080808;
    border-width: 1px 0;
  `}
`

const LayerCell = styled.div`
  display: flex;
  align-items: center;
  height: ${p => (p.$head ? 11 : 16)}px;
  gap: ${p => p.$gap || 0}px;
  padding-left: ${p => (p.$pad === undefined ? 5 : p.$pad)}px;
  border-left: ${p => (p.$head && !p.$first ? '1px solid #0c0c0c' : '0')};
  color: ${p => (p.$head ? '#999' : '#a8a8a8')};
`

const SwitchCell = styled.span`
  display: grid;
  place-items: center;
  flex: none;
  width: 15px;
  height: 14px;
  color: ${p => (p.$dim ? '#6a6a6a' : '#b4b4b4')};
  i { width: 13px; height: 13px; background: #252525; }
`

const Fx = styled.em`
  font: italic 13px 'Liberation Serif', serif;
`

const TrackPane = styled.div`
  position: relative;
  display: flex;
  flex-direction: column;
  flex: 1;
  min-width: 0;
  padding-top: 2px;
`

const TrackRow = styled.div`
  display: flex;
  flex: none;
  height: ${p => p.$h}px;
  ${p => p.$line && css`border-bottom: 1px solid #080808;`}
  ${p => p.$top && css`border-top: 1px solid #080808;`}
`

const Handle = styled.span`
  width: 7px;
  background: ${c.blue};
  border-radius: ${p => (p.$end ? '0 5px 5px 0' : '5px 0 0 5px')};
`

const Bar = styled.span`
  flex: 1;
  background: ${p => p.$color};
`

const Pad = styled.span`
  display: grid;
  place-items: center;
  width: ${p => p.$w}px;
  color: #b4b4b4;
`

const Ruler = styled.div`
  display: flex;
  flex: 1;
  justify-content: space-between;
  color: #999;
`

const RulerMark = styled.span`
  display: flex;
  flex-direction: column;
  align-items: center;
  justify-content: flex-end;
  width: 0;
  line-height: 14px;
  &::after {
    content: '';
    width: 2px;
    height: 5px;
    background: #757575;
  }
`

const Tracks = styled.div`
  flex: 1;
  margin-right: 24px;
  background: #303030;
`

const Playhead = styled.div`
  position: absolute;
  left: 2px;
  top: 17px;
  bottom: 0;
  width: 11px;
  display: flex;
  flex-direction: column;
  align-items: center;
  color: ${c.blue};
  &::after {
    content: '';
    flex: 1;
    width: 1px;
    background: ${c.blue};
  }
`

const TimelineFoot = styled.div`
  display: flex;
  align-items: center;
  flex: none;
  height: 18px;
  padding-left: 4px;
  gap: 3px;
  background: linear-gradient(90deg, #080808 640px, transparent 640px) top / 100% 1px no-repeat;
`

const ToggleButton = styled.button`
  width: 134px;
  height: 16px;
  margin: 0 138px 0 206px;
  border: 1px solid #2d2d2d;
  border-radius: 3px;
  line-height: 14px;
`

const ZoomSlider = styled.input`
  appearance: none;
  width: 50px;
  height: 12px;
  margin: 0 8px 0 6px;
  background: linear-gradient(#3a3a3a, #3a3a3a) center / 100% 2px no-repeat;
  &::-webkit-slider-thumb {
    appearance: none;
    width: 10px;
    height: 10px;
    border: 2px solid #8a8a8a;
    border-radius: 50%;
    background: ${c.panel};
  }
`

function Timeline() {
  const seconds = Array.from({ length: 16 }, (_, i) => String(i * 2).padStart(2, '0') + 's')
  return (
    <TimelinePanel>
      <TimelineTabs>
        <CloseX aria-label="close"><Glyph name="closeTab" size={5} /></CloseX>
        <Swatch />
        <span>Comp 1</span>
        <Burger aria-label="panel menu" />
      </TimelineTabs>
      <TimelineBody>
        <LayerPane>
          <TimeTools>
            <Timecode><strong>0;00;00;00</strong>00000 (29.97 fps)</Timecode>
            <SearchBox $w={225}>
              <Glyph name="search" size={12} />
              <DownTri />
              <input aria-label="Search layers" />
            </SearchBox>
            <Space $w={11} />
            <Tool aria-label="mini flowchart"><Glyph name="flow" /></Tool>
            <Space $w={8} />
            <Tool aria-label="draft 3d"><Glyph name="draft3d" /></Tool>
            <Space $w={9} />
            <Tool aria-label="shy"><Glyph name="shy" /></Tool>
            <Tool aria-label="frame blending"><Glyph name="blend" size={14} /></Tool>
            <Tool aria-label="motion blur"><Glyph name="motion" size={14} /></Tool>
            <Space $w={10} />
            <Tool aria-label="graph editor"><Glyph name="graph" size={15} /></Tool>
          </TimeTools>
          <LayerGrid $head>
            <LayerCell $head $first $pad={3}>
              <SwitchCell><Glyph name="eye" size={11} /></SwitchCell>
              <SwitchCell><FaVolumeUp size={11} /></SwitchCell>
              <SwitchCell><Glyph name="dot" size={11} /></SwitchCell>
              <SwitchCell><FaLock size={10} /></SwitchCell>
            </LayerCell>
            <LayerCell $head $pad={12}><FaTag size={11} color="#b4b4b4" /></LayerCell>
            <LayerCell $head $gap={8}>#<span>.</span></LayerCell>
            <LayerCell $head>Source Name</LayerCell>
            <LayerCell $head $pad={2}>
              <SwitchCell><Glyph name="shySwitch" size={11} /></SwitchCell>
              <SwitchCell><Glyph name="sun" size={12} /></SwitchCell>
              <SwitchCell><Glyph name="quality" size={10} /></SwitchCell>
              <SwitchCell><Fx>fx</Fx></SwitchCell>
              <SwitchCell><Glyph name="frame" size={11} /></SwitchCell>
              <SwitchCell><Glyph name="motion" size={12} /></SwitchCell>
              <SwitchCell><Glyph name="adjust" size={12} /></SwitchCell>
              <SwitchCell><Glyph name="cube" size={12} /></SwitchCell>
            </LayerCell>
            <LayerCell $head>Parent &amp; Link</LayerCell>
            <LayerCell $head />
          </LayerGrid>
          <LayerGrid>
            <LayerCell $pad={3}>
              <SwitchCell><Glyph name="eye" size={11} /></SwitchCell>
              <SwitchCell />
              <SwitchCell><i /></SwitchCell>
              <SwitchCell><i /></SwitchCell>
            </LayerCell>
            <LayerCell $pad={2} $gap={5}>
              <Glyph name="arrowRight" size={10} />
              <Swatch $size={12} $color="#6c7ddf" />
            </LayerCell>
            <LayerCell $pad={7}>1</LayerCell>
            <LayerCell $pad={4} $gap={7}><FaStar size={12} />Shape Layer 1</LayerCell>
            <LayerCell $pad={3}>
              <SwitchCell><Glyph name="shySwitch" size={11} /></SwitchCell>
              <SwitchCell $dim><Glyph name="sun" size={11} /></SwitchCell>
              <SwitchCell><Glyph name="slash" size={10} /></SwitchCell>
              <SwitchCell />
              <SwitchCell />
              <SwitchCell><i /></SwitchCell>
              <SwitchCell><i /></SwitchCell>
              <SwitchCell><i /></SwitchCell>
            </LayerCell>
            <LayerCell $gap={6}>
              <Glyph name="spiral" size={12} />
              <Select label="Parent" w={90} h={16} value="None" />
            </LayerCell>
          </LayerGrid>
        </LayerPane>
        <TrackPane>
          <TrackRow $h={10} $line $top>
            <Handle /><Bar $color="#6a6a6a" /><Handle $end /><Pad $w={17} />
          </TrackRow>
          <TrackRow $h={20} $line>
            <Pad $w={7} />
            <Ruler>
              {seconds.map((s, i) => <RulerMark key={s}>{i === 0 ? ':' + s : s}</RulerMark>)}
            </Ruler>
            <Pad $w={24} />
          </TrackRow>
          <TrackRow $h={16} $line>
            <Handle /><Bar $color="#5f5f5f" /><Handle $end />
            <Pad $w={17}><Glyph name="marker" size={13} /></Pad>
          </TrackRow>
          <TrackRow $h={4} $line>
            <Pad $w={7} /><Bar $color="#28a830" /><Pad $w={24} />
          </TrackRow>
          <TrackRow $h={16}>
            <Pad $w={7} /><Bar $color="#545d8d" /><Pad $w={7} />
            <Pad $w={17}><Glyph name="compBtn" size={14} /></Pad>
          </TrackRow>
          <Tracks />
          <Playhead>
            <GlyphSvg width="11" height="13"><path d="M0 0h11v7l-5.500 6L0 7z" /></GlyphSvg>
          </Playhead>
        </TrackPane>
      </TimelineBody>
      <TimelineFoot>
        <Tool as="span" $w={15}><Glyph name="layers" size={12} /></Tool>
        <Tool as="span" $w={15}><Glyph name="modes" size={12} /></Tool>
        <Tool as="span" $w={15}><Glyph name="inOut" size={12} /></Tool>
        <ToggleButton>Toggle Switches / Modes</ToggleButton>
        <Glyph name="mountain" size={9} />
        <ZoomSlider type="range" aria-label="Timeline zoom" defaultValue="0" />
        <Glyph name="mountains" size={15} />
      </TimelineFoot>
    </TimelinePanel>
  )
}

/* ---------- windows taskbar ---------- */

const TaskBar = styled.footer`
  display: flex;
  align-items: stretch;
  flex: none;
  height: 40px;
  background: #101010;
  color: #fff;
`

const StartButton = styled.button`
  display: grid;
  place-items: center;
  width: 48px;
`

const TaskSearch = styled.label`
  display: flex;
  align-items: center;
  gap: 11px;
  width: 344px;
  padding-left: 11px;
  background: #3b3b3b;
  border: 1px solid #5e5e5e;
  font-size: 14px;
  input { border: 0; padding: 0; background: none; outline: 0; width: 240px; line-height: 20px; }
  input::placeholder { color: #d8d8d8; opacity: 1; }
`

const AppButton = styled.button`
  display: grid;
  place-items: center;
  width: 49px;
  background:
    ${p => (p.$open || p.$active ? 'linear-gradient(#f3929a, #f3929a)' : 'none')} bottom / ${p => (p.$active ? 49 : 40)}px 2px no-repeat
    ${p => (p.$active ? '#343434' : 'transparent')};
`

const Tray = styled.div`
  display: flex;
  align-items: center;
  margin-left: auto;
  font-size: 12px;
`

const TrayItem = styled.span`
  display: grid;
  place-items: center;
  width: ${p => p.$w || 24}px;
`

const Clock = styled.time`
  width: 66px;
  margin: 0 13px 0 3px;
  text-align: center;
  font-size: 11px;
  line-height: 18px;
`

const Notify = styled.button`
  position: relative;
  width: 24px;
  height: 26px;
  margin-right: 13px;
  span {
    position: absolute;
    right: 0;
    bottom: 0;
    width: 17px;
    height: 17px;
    border: 1px solid #8a8a8a;
    border-radius: 50%;
    background: #333;
    font-size: 11px;
    line-height: 15px;
  }
`

const ShowDesktop = styled.button`
  align-self: stretch;
  width: 5px;
  border-left: 1px solid #4f4f4f;
`

function SteamLogo({ size }) {
  return (
    <GlyphSvg width={size} height={size} viewBox="0 0 24 24" aria-hidden="true">
      <defs>
        <linearGradient id={'steam' + size} x1="0" y1="0" x2="0" y2="1">
          <stop offset="0" stopColor="#14193c" /><stop offset="1" stopColor="#2383b8" />
        </linearGradient>
      </defs>
      <circle cx="12" cy="12" r="12" fill={'url(#steam' + size + ')'} />
      <path fill="#fff" d="M.3 13.500 7 16.200a3.500 3.500 0 0 1 2-.5l3-4.300a4.600 4.600 0 1 1 4.500 4.800l-4.200 3a3.500 3.500 0 0 1-6.800.5L1 17.500z" />
      <circle cx="16.500" cy="11" r="2.900" fill="none" stroke="#1c3f6b" strokeWidth="1.100" />
      <circle cx="9" cy="18.800" r="2" fill="none" stroke="#2474a5" />
    </GlyphSvg>
  )
}

const svgLogos = {
  folder: <><path fill="#e5a82a" d="M0 2h9l2 2h13v3H0z" /><path fill="#fbd55e" d="M0 5h24v16H0z" /><path fill="#3f95d8" d="M4 22v-8h16v8h-4v-4H8v4z" /></>,
  mail: <><path fill="#0f5fae" d="M0 9 12 0l12 9v13H0z" /><path fill="#2aa3e4" d="M0 9h24v14H0z" /><path fill="#eef6fc" d="M0 8.500h24L12 17z" /><path fill="#1b86d0" d="M0 23 9 14.500l3 2.500 3-2.500L24 23z" opacity=".7" /></>,
  chrome: <><circle cx="12" cy="12" r="12" fill="#fbc724" /><path fill="#de4a3c" d="M12 12 1.600 6A12 12 0 0 1 22.400 6z" /><path fill="#2c9f51" d="M12 12 1.600 6A12 12 0 0 0 11 24l5-9z" /><path fill="#de4a3c" d="M12 6h10.400L20 3H5L1.600 6l5 8.500z" /><circle cx="12" cy="12" r="5.600" fill="#fff" /><circle cx="12" cy="12" r="4.400" fill="#4285f4" /></>,
  edge: <>
    <defs>
      <linearGradient id="edgeTop" x1="0" y1="0" x2="1" y2=".3"><stop offset="0" stopColor="#2ba6df" /><stop offset="1" stopColor="#5fdc5a" /></linearGradient>
      <linearGradient id="edgeLow" x1="0" y1="0" x2="1" y2="1"><stop offset="0" stopColor="#1c87d6" /><stop offset="1" stopColor="#124c9c" /></linearGradient>
    </defs>
    <circle cx="12" cy="12" r="12" fill="url(#edgeLow)" />
    <path fill="url(#edgeTop)" d="M.3 10.500Q2 0 12 0q11 0 12 10 0 6-6 6.500-4 0-3.500-2.500 1.500-2 0-4.500Q12 6 7.500 6 2.500 6 .3 10.500" />
    <path fill="#101010" d="M14.500 14q-.5 2.500 3.500 2.500 3 0 5-2l1 1-3 4.500q-7 1-9.500-3.500-1-4 2.500-6 1.800 1.500.5 3.500" />
    <path fill="#1a60b4" d="M8 10q-4 7 2 11 5 2.500 9.500 0-5 1-8-3-2.500-4 .5-7.500Q10 9 8 10" />
  </>,
  word: <><path fill="#41a5ee" d="M6 1h18v6H6z" /><path fill="#2b7cd3" d="M6 7h18v5H6z" /><path fill="#185abd" d="M6 12h18v5H6z" /><path fill="#103f91" d="M6 17h18v5H6z" /><path fill="#185abd" d="M0 6h12v12H0z" /><path fill="none" stroke="#fff" strokeWidth="1.600" d="M2.200 8.500 4 15.500l2-6 2 6 1.800-7" /></>,
  green: <><circle cx="12" cy="12" r="12" fill="#45d62c" /><g fill="none" stroke="#12380c" strokeWidth="1.800"><path d="M5.500 17a7.500 7.500 0 1 1 13 0M9 17.500a4.500 4.500 0 1 1 6 0" /><circle cx="12" cy="13.500" r="1.700" /></g></>,
}

const Logo = ({ name }) => <GlyphSvg width="24" height="24" viewBox="0 0 24 24" aria-hidden="true">{svgLogos[name]}</GlyphSvg>

const apps = [
  { n: 'Cortana', icon: <svg width="17" height="17"><circle cx="8.500" cy="8.500" r="6.800" fill="none" stroke="#fff" strokeWidth="2" /></svg> },
  { n: 'Task View', icon: <Glyph name="taskView" /> },
  { n: 'File Explorer', icon: <Logo name="folder" /> },
  { n: 'Mail', icon: <Logo name="mail" />, open: true },
  { n: 'Spotify', icon: <FaSpotify size={24} color="#1ed760" />, open: true },
  { n: 'Chrome', icon: <Logo name="chrome" />, open: true },
  { n: 'Edge', icon: <Logo name="edge" /> },
  { n: 'Steam', icon: <SteamLogo size={23} /> },
  { n: 'Lightroom', icon: <AppBadge $size={21} $bg="#001e36" $fg="#31a8ff">Lr</AppBadge> },
  { n: 'Photoshop', icon: <AppBadge $size={21} $bg="#001e36" $fg="#31a8ff">Ps</AppBadge> },
  { n: 'After Effects', icon: <AppBadge $size={21} $bg="#00005b" $fg="#9999ff">Ae</AppBadge>, active: true },
  { n: 'Illustrator', icon: <AppBadge $size={21} $bg="#330000" $fg="#ff9a00">Ai</AppBadge>, open: true },
  { n: 'Word', icon: <Logo name="word" /> },
  { n: 'Cortex', icon: <Logo name="green" /> },
]

const trayIcons = {
  cloud: <><path fill="#a8a8a8" d="M1 11q-1-4 3-4.500 1-4 5-3.500 3 .5 3 3.500 3 .5 2.500 4.500z" /><circle cx="12" cy="12" r="4.500" fill="#d4232c" /><path stroke="#fff" strokeWidth="1.400" d="M10.200 10.200l3.600 3.600M13.800 10.200l-3.600 3.600" /></>,
  update: <><path fill="none" stroke="#fff" strokeWidth="1.200" d="M1 2.500 15 1v12.500L1 12.500zM3 15h6M5 7.500Q6 4 9.500 5.500M11 8q-1 3.500-4.500 2M9.700 3.500v2.500H7.500M6.300 12V9.500h2" /><circle cx="12.500" cy="12.500" r="3.500" fill="#f59b14" /></>,
  battery: <><path fill="none" stroke="#fff" strokeWidth="1.200" d="M4.500 5.500h10v7h-10zM15.500 7.500v3M.7 3.500h4v2q-2 2.500-4 0zM1.700 1.500v2M3.700 1.500v2M2.700 7v4h2" /><path fill="#fff" d="M6.500 7.500h6v3h-6z" /></>,
  wifi: <g fill="none" stroke="#fff" strokeWidth="1.200"><path opacity=".5" d="M1 14Q1.500 3 14 1.500" /><path d="M4 14.500Q4.500 6 14 5M7.500 14.500Q8 9 14 8.500" /><circle cx="12.500" cy="13" r="1.500" fill="#fff" stroke="none" /></g>,
  sound: <path fill="none" stroke="#fff" strokeWidth="1.100" d="M.7 5.500h2.500L7 2v12l-3.800-3.500H.7zM9 5.500q2 2.500 0 5M11 3.500q3.500 4.500 0 9M13 1.500q5 6.500 0 13" />,
  pen: <path fill="none" stroke="#fff" strokeWidth="1.300" d="M5 12 11.500 1.500 14 3 8 13l-3 1.500zM5 8Q1 8 1 11.500T5 14.500M8 13q4-5 5-5 1 1-1 3t3 1" />,
}

const TrayIcon = ({ name }) => <svg width="16" height="16" viewBox="0 0 16 16" aria-hidden="true">{trayIcons[name]}</svg>

function WindowsTaskBar() {
  return (
    <TaskBar>
      <StartButton aria-label="Start"><FaWindows size={17} /></StartButton>
      <TaskSearch>
        <Glyph name="search" size={17} />
        <input placeholder="Type here to search" aria-label="Type here to search" />
      </TaskSearch>
      {apps.map(a => <AppButton key={a.n} aria-label={a.n} $open={a.open} $active={a.active}>{a.icon}</AppButton>)}
      <Tray>
        <TrayItem><Glyph name="chevronUp" size={12} /></TrayItem>
        <TrayItem><SteamLogo size={16} /></TrayItem>
        {['cloud', 'update', 'battery', 'wifi', 'sound'].map(n => <TrayItem key={n}><TrayIcon name={n} /></TrayItem>)}
        <TrayItem $w={32}><TrayIcon name="pen" /></TrayItem>
        <TrayItem $w={36}>ENG</TrayItem>
        <Clock>15:58<br />12/11/2020</Clock>
        <Notify aria-label="notifications">
          <svg width="24" height="20"><path fill="#fff" d="M0 1h16v12h-6l-3 4v-4H0z" /><path stroke="#101010" d="M3 4.500h10M3 7.500h10M3 10.500h6" /></svg>
          <span>1</span>
        </Notify>
        <ShowDesktop aria-label="show desktop" />
      </Tray>
    </TaskBar>
  )
}

export default function App() {
  return (
    <>
      <GlobalStyle />
      <Page>
        <TitleBar>
          <AppBadge $size={16} $bg="#00005b" $fg="#9999ff">Ae</AppBadge>
          Adobe After Effects 2020 - Untitled Project.aep *
          <WindowButtons>
            {['minimize', 'restore', 'close'].map(n => (
              <button key={n} aria-label={n}><Glyph name={n} size={12} /></button>
            ))}
          </WindowButtons>
        </TitleBar>
        <MenuBar>
          {menus.map(m => <button key={m}>{m}</button>)}
        </MenuBar>
        <TopTools />
        <Main>
          <ProjectPanel />
          <CompositionPanel />
          <SideColumn />
          <Gutter><GutterThumb /></Gutter>
        </Main>
        <Timeline />
        <WindowsTaskBar />
      </Page>
    </>
  )
}
